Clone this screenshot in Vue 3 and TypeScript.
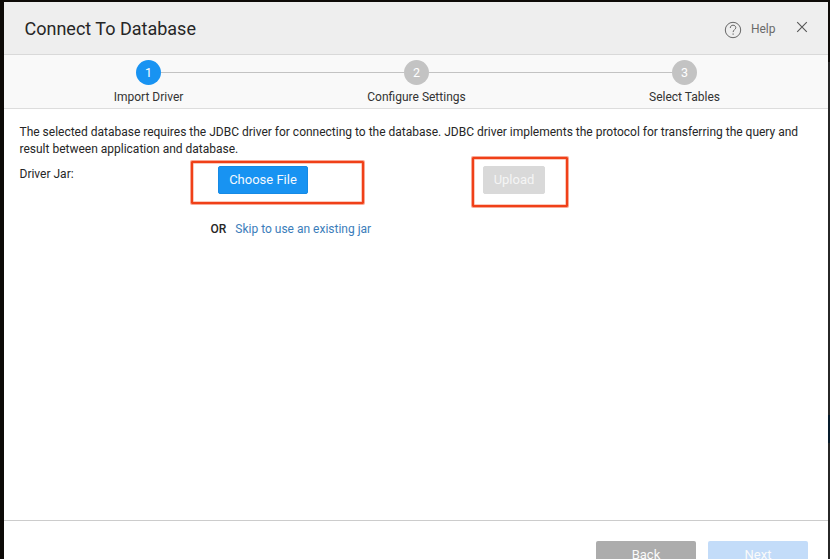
<script setup lang="ts">
interface Step {
  id: number
  label: string
}

const steps: Step[] = [
  { id: 1, label: 'Import Driver' },
  { id: 2, label: 'Configure Settings' },
  { id: 3, label: 'Select Tables' },
]
const current = 1
</script>

<template>
  <div class="backdrop">
    <section class="dialog">
      <header class="header">
        <h1 class="title">Connect To Database</h1>
        <a class="help">
          <svg class="help-icon" viewBox="0 0 18 18" width="18" height="18">
            <circle cx="9" cy="9" r="7.7" />
            <path d="M6.3 7C6.3 5.2 7.4 4.2 9 4.2s2.8 1 2.8 2.5c0 1.9-2.7 2.1-2.7 4.4" />
            <path d="M9.1 12.4v1.4" />
          </svg>
          <span>Help</span>
        </a>
        <svg class="close" viewBox="0 0 12 12" width="12" height="12">
          <path d="M1.2 1.2l9.6 9.6M10.8 1.2l-9.6 9.6" />
        </svg>
      </header>

      <ol class="steps">
        <li v-for="step in steps" :key="step.id" class="step" :class="{ active: step.id === current }">
          <span class="dot">{{ step.id }}</span>
          <span class="label">{{ step.label }}</span>
        </li>
      </ol>

      <main class="body">
        <p class="intro">
          The selected database requires the JDBC driver for connecting to the database. JDBC driver implements the protocol for transferring the query and<br />result between application and database.
        </p>
        <div class="row">
          <span class="field-label">Driver Jar:</span>
          <button class="btn choose">Choose File</button>
          <button class="btn upload" disabled>Upload</button>
        </div>
        <div class="alt"><strong>OR</strong><a class="skip">Skip to use an existing jar</a></div>
        <span class="mark mark-choose"></span>
        <span class="mark mark-upload"></span>
      </main>

      <footer class="footer">
        <button class="nav back">Back</button>
        <button class="nav next" disabled>Next</button>
      </footer>
    </section>
    <span class="side-shade"></span>
    <span class="side-accent"></span>
  </div>
</template>

<style>
body {
  overflow: hidden;
}
</style>

<style scoped>
.backdrop {
  position: relative;
  box-sizing: border-box;
  width: 830px;
  height: 559px;
  padding: 2px 2px 0 4px;
  overflow: hidden;
  background: #0d0a07;
  font-family: Roboto, "Liberation Sans", sans-serif;
  font-size: 12px;
  color: #262626;
}
.dialog {
  position: relative;
  display: flex;
  flex-direction: column;
  height: 590px;
  background: #fff;
}
.header {
  display: flex;
  flex: none;
  box-sizing: border-box;
  height: 53px;
  padding: 0 20px 0 20.5px;
  background: #eee;
  border-bottom: 1px solid #d9d9d9;
}
.title {
  flex: 1;
  margin: 0;
  padding-top: 15px;
  font-size: 18px;
  line-height: 24px;
  font-weight: 400;
}
.help {
  display: flex;
  gap: 9px;
  padding-top: 19px;
  line-height: 16px;
  color: #6a6a6a;
}
.help-icon {
  fill: none;
  stroke: #666;
  stroke-width: 1;
}
.close {
  margin: 19px 0 0 20.5px;
  fill: none;
  stroke: #555;
  stroke-width: 1.1;
}
.steps {
  display: grid;
  flex: none;
  grid-template-columns: repeat(3, 268px);
  box-sizing: border-box;
  height: 54px;
  margin: 0;
  padding: 5px 0 0 10.5px;
  list-style: none;
  background: #f9f9f9;
  border-bottom: 1px solid #ddd;
}
.step {
  display: grid;
  grid-template-columns: 1fr 25px 1fr;
  grid-template-rows: 25px 24px;
  align-items: center;
}
.step::before,
.step::after {
  content: "";
  height: 1px;
  background: #c3c3c3;
}
.step::before {
  order: 0;
}
.dot {
  order: 1;
  height: 25px;
  border-radius: 50%;
  background: #c3c3c3;
  color: #fff;
  font-size: 12.5px;
  line-height: 25px;
  text-align: center;
}
.step::after {
  order: 2;
}
.label {
  order: 3;
  grid-column: 1 / -1;
  text-align: center;
  color: #333;
}
.step:first-child::before,
.step:last-child::after {
  background: transparent;
}
.active .dot {
  background: #1893f2;
}
.body {
  flex: none;
  box-sizing: border-box;
  height: 411px;
  padding: 15px 15.5px 0;
}
.intro {
  margin: 0;
  line-height: 17px;
  letter-spacing: -0.004px;
  white-space: nowrap;
}
.row {
  display: flex;
  margin-top: 8px;
}
.field-label {
  width: 198.5px;
  line-height: 16px;
}
.btn {
  box-sizing: border-box;
  height: 28px;
  padding: 0;
  border: 1px solid #168ae5;
  border-radius: 2px;
  background: #1893f2;
  color: #f4f9fe;
  font: 400 13px/26px Roboto, sans-serif;
}
.choose {
  width: 90px;
}
.upload {
  width: 62px;
  margin-left: 175px;
  border-color: #d9d9d9;
  background: #d9d9d9;
  color: #f5f5f5;
}
.alt {
  display: flex;
  gap: 9px;
  margin: 27px 0 0 191px;
  line-height: 16px;
}
.alt strong {
  font-weight: 500;
}
.skip {
  color: #3b7dba;
}
.mark {
  position: absolute;
  box-sizing: border-box;
  border: 2px solid #f04018;
  border-radius: 1px;
  box-shadow: 0 0 0 1px rgba(240, 64, 24, 0.45), inset 0 0 0 0.5px #f7967d;
}
.mark-choose {
  left: 187px;
  top: 159px;
  width: 173px;
  height: 43px;
}
.mark-upload {
  left: 468px;
  top: 155px;
  width: 96px;
  height: 50px;
}
.footer {
  display: flex;
  flex: 1;
  align-items: flex-start;
  justify-content: flex-end;
  gap: 12px;
  padding: 20px 20px 0;
  border-top: 1px solid #ccc;
}
.nav {
  width: 100px;
  height: 28px;
  padding: 0;
  border: 0;
  border-radius: 2px;
  background: #acacac;
  color: #fafafa;
  font: 400 13px/28px Roboto, sans-serif;
}
.next {
  background: #c3dcf9;
}
.side-shade,
.side-accent {
  position: absolute;
  right: 0;
  width: 2px;
}
.side-shade {
  top: 62px;
  bottom: 0;
  background: #272727;
}
.side-accent {
  top: 415px;
  height: 28px;
  background: #071b2b;
}
</style>
